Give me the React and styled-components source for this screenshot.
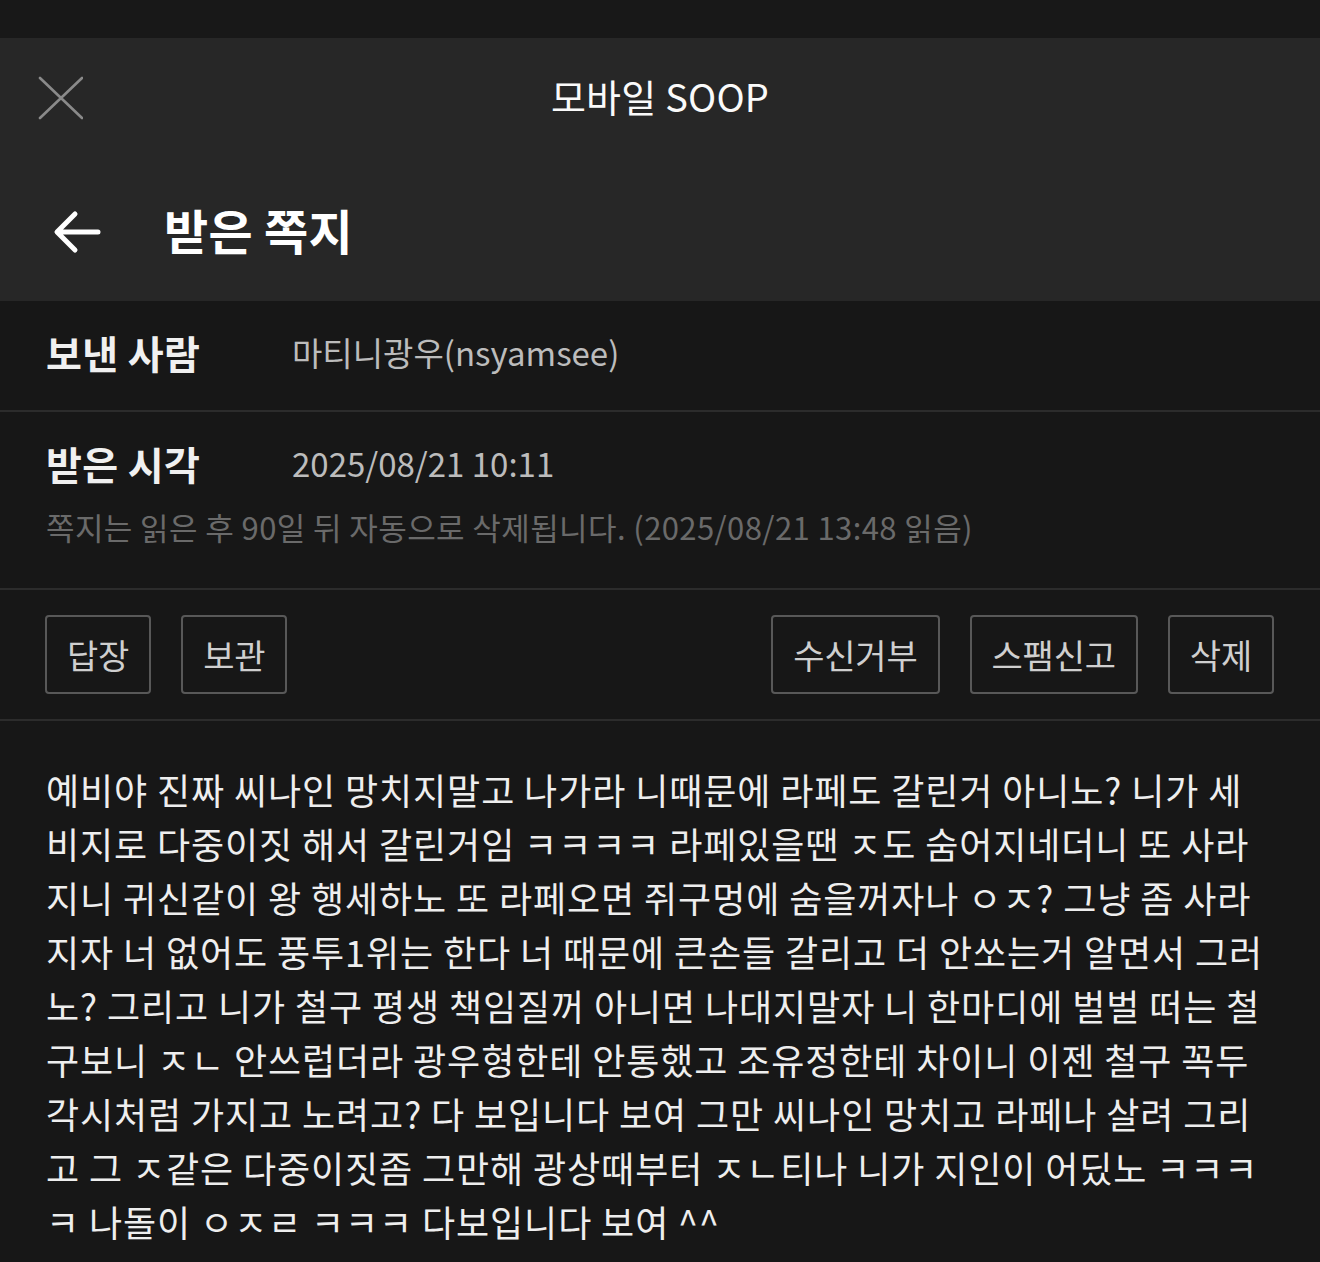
import React from "react";
import styled, { createGlobalStyle } from "styled-components";

const Global = createGlobalStyle`
  html, body { margin: 0; padding: 0; background: #171717; }
  body { font-family: "Noto Sans CJK KR", "Noto Sans", sans-serif; }
  * { box-sizing: border-box; }
`;

const Page = styled.div`
  width: 1320px;
  min-height: 1262px;
  background: #171717;
  display: flex;
  flex-direction: column;
`;

const StatusStrip = styled.div`
  height: 38px;
  background: #181818;
`;

const Header = styled.header`
  height: 263px;
  background: #272727;
  display: flex;
  flex-direction: column;
`;

const TopBar = styled.div`
  height: 120px;
  position: relative;
  display: flex;
  align-items: center;
  justify-content: center;
  padding-bottom: 6px;
`;

const CloseBtn = styled.button`
  position: absolute;
  left: 34px;
  top: 35px;
  width: 52px;
  height: 50px;
  padding: 0;
  border: 0;
  background: none;
  display: flex;
  align-items: center;
  justify-content: center;
`;

const AppTitle = styled.h1`
  margin: 0;
  font-size: 38px;
  font-weight: 400;
  color: #fafafa;
  letter-spacing: 0.2px;
`;

const PageBar = styled.div`
  flex: 1;
  display: flex;
  align-items: center;
  padding: 0 0 0 52px;
  gap: 62px;
`;

const BackBtn = styled.button`
  width: 50px;
  height: 44px;
  padding: 0;
  border: 0;
  background: none;
  display: flex;
  align-items: center;
  margin-top: 4px;
`;

const PageTitle = styled.h2`
  margin: 0;
  font-size: 48px;
  font-weight: 700;
  color: #ffffff;
  letter-spacing: 0.3px;
  line-height: 1.3;
`;

const InfoRow = styled.div`
  height: ${(p) => p.$h}px;
  display: flex;
  flex-direction: column;
  padding: 24px 46px 0;
  border-bottom: 2px solid #2c2c2c;
  gap: 15px;
`;

const Field = styled.div`
  display: flex;
  align-items: center;
  height: 54px;
`;

const Label = styled.span`
  width: 246px;
  font-size: 39px;
  font-weight: 700;
  color: #f0f0f0;
  letter-spacing: 0.4px;
  line-height: 54px;
`;

const Value = styled.span`
  font-size: 33px;
  color: #bcbcbc;
  letter-spacing: 0;
  line-height: 54px;
`;

const Note = styled.p`
  margin: 0;
  font-size: 31px;
  line-height: 43px;
  color: #6a6a6a;
  letter-spacing: 0.4px;
`;

const Actions = styled.div`
  height: 131px;
  display: flex;
  align-items: flex-start;
  justify-content: space-between;
  padding: 25px 46px 0 45px;
  border-bottom: 2px solid #2c2c2c;
`;

const ButtonGroup = styled.div`
  display: flex;
  gap: 30px;
`;

const ActionButton = styled.button`
  height: 79px;
  padding: 0 20px;
  min-width: 105px;
  background: transparent;
  border: 2px solid #585858;
  border-radius: 4px;
  color: #cfcfcf;
  font-family: inherit;
  font-size: 34px;
  letter-spacing: -0.2px;
  display: flex;
  align-items: center;
  justify-content: center;
`;

const Body = styled.div`
  padding: 41px 46px 20px 46px;
  font-size: 36px;
  line-height: 54px;
  color: #eeeeee;
  letter-spacing: 0.9px;
  white-space: nowrap;
`;

const lines = [
  "예비야 진짜 씨나인 망치지말고 나가라 니때문에 라페도 갈린거 아니노? 니가 세",
  "비지로 다중이짓 해서 갈린거임 ㅋㅋㅋㅋ 라페있을땐 ㅈ도 숨어지네더니 또 사라",
  "지니 귀신같이 왕 행세하노 또 라페오면 쥐구멍에 숨을꺼자나 ㅇㅈ? 그냥 좀 사라",
  "지자 너 없어도 풍투1위는 한다 너 때문에 큰손들 갈리고 더 안쏘는거 알면서 그러",
  "노? 그리고 니가 철구 평생 책임질꺼 아니면 나대지말자 니 한마디에 벌벌 떠는 철",
  "구보니 ㅈㄴ 안쓰럽더라 광우형한테 안통했고 조유정한테 차이니 이젠 철구 꼭두",
  "각시처럼 가지고 노려고? 다 보입니다 보여 그만 씨나인 망치고 라페나 살려 그리",
  "고 그 ㅈ같은 다중이짓좀 그만해 광상때부터 ㅈㄴ티나 니가 지인이 어딨노 ㅋㅋㅋ",
  "ㅋ 나돌이 ㅇㅈㄹ ㅋㅋㅋ 다보입니다 보여 ^^",
];

export default function App() {
  return (
    <Page>
      <Global />
      <StatusStrip />
      <Header>
        <TopBar>
          <CloseBtn aria-label="닫기">
            <svg width="46" height="44" viewBox="0 0 46 44">
              <path d="M3 2 L45 42 M45 2 L3 42" stroke="#8a8a8a" strokeWidth="2.6" strokeLinecap="round" fill="none" />
            </svg>
          </CloseBtn>
          <AppTitle>모바일 SOOP</AppTitle>
        </TopBar>
        <PageBar>
          <BackBtn aria-label="뒤로">
            <svg width="50" height="44" viewBox="0 0 50 44">
              <path d="M46 22 H6 M23 4 L5 22 L23 40" stroke="#ffffff" strokeWidth="5" strokeLinecap="round" strokeLinejoin="round" fill="none" />
            </svg>
          </BackBtn>
          <PageTitle>받은 쪽지</PageTitle>
        </PageBar>
      </Header>
      <InfoRow $h={111}>
        <Field>
          <Label>보낸 사람</Label>
          <Value>마티니광우(nsyamsee)</Value>
        </Field>
      </InfoRow>
      <InfoRow $h={178}>
        <Field>
          <Label>받은 시각</Label>
          <Value>2025/08/21 10:11</Value>
        </Field>
        <Note>쪽지는 읽은 후 90일 뒤 자동으로 삭제됩니다. (2025/08/21 13:48 읽음)</Note>
      </InfoRow>
      <Actions>
        <ButtonGroup>
          <ActionButton>답장</ActionButton>
          <ActionButton>보관</ActionButton>
        </ButtonGroup>
        <ButtonGroup>
          <ActionButton>수신거부</ActionButton>
          <ActionButton>스팸신고</ActionButton>
          <ActionButton>삭제</ActionButton>
        </ButtonGroup>
      </Actions>
      <Body>
        {lines.map((l, i) => (
          <React.Fragment key={i}>
            {l}
            {i < lines.length - 1 && <br />}
          </React.Fragment>
        ))}
      </Body>
    </Page>
  );
}
